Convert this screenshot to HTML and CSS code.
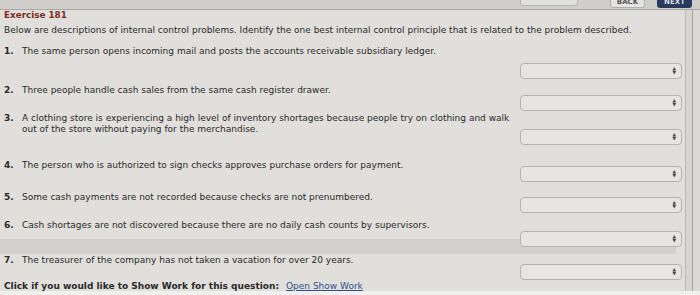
FILE: index.html
```html
<!DOCTYPE html>
<html>
<head>
<meta charset="utf-8">
<link rel="stylesheet" href="styles.css">
</head>
<body>
<div class="screen">
  <div class="topbar">
    <div class="btn-gray"></div>
    <div class="btn-back">BACK</div>
    <div class="btn-next">NEXT</div>
  </div>
  <div class="main">
    <div class="panel">
      <h1 class="title">Exercise 181</h1>
      <p class="intro">Below are descriptions of internal control problems. Identify the one best internal control principle that is related to the problem described.</p>
      <div class="rows">
        <div class="row r1">
          <p class="q"><b>1.</b><span>The same person opens incoming mail and posts the accounts receivable subsidiary ledger.</span></p>
          <div class="sel"><span class="arrows"><span>&#x25B2;</span><span>&#x25BC;</span></span></div>
        </div>
        <div class="row r2">
          <p class="q"><b>2.</b><span>Three people handle cash sales from the same cash register drawer.</span></p>
          <div class="sel"><span class="arrows"><span>&#x25B2;</span><span>&#x25BC;</span></span></div>
        </div>
        <div class="row r3">
          <p class="q"><b>3.</b><span>A clothing store is experiencing a high level of inventory shortages because people try on clothing and walk out of the store without paying for the merchandise.</span></p>
          <div class="sel"><span class="arrows"><span>&#x25B2;</span><span>&#x25BC;</span></span></div>
        </div>
        <div class="row r4">
          <p class="q"><b>4.</b><span>The person who is authorized to sign checks approves purchase orders for payment.</span></p>
          <div class="sel"><span class="arrows"><span>&#x25B2;</span><span>&#x25BC;</span></span></div>
        </div>
        <div class="row r5">
          <p class="q"><b>5.</b><span>Some cash payments are not recorded because checks are not prenumbered.</span></p>
          <div class="sel"><span class="arrows"><span>&#x25B2;</span><span>&#x25BC;</span></span></div>
        </div>
        <div class="row r6">
          <p class="q"><b>6.</b><span>Cash shortages are not discovered because there are no daily cash counts by supervisors.</span></p>
          <div class="sel"><span class="arrows"><span>&#x25B2;</span><span>&#x25BC;</span></span></div>
        </div>
        <div class="band"></div>
        <div class="row r7">
          <p class="q"><b>7.</b><span>The treasurer of the company has not taken a vacation for over 20 years.</span></p>
          <div class="sel"><span class="arrows"><span>&#x25B2;</span><span>&#x25BC;</span></span></div>
        </div>
      </div>
      <p class="showwork"><b>Click if you would like to Show Work for this question:</b><a href="#">Open Show Work</a></p>
    </div>
    <div class="edge"></div>
  </div>
  <div class="bottom"></div>
</div>
</body>
</html>
```

FILE: styles.css
```css
html, body {
  margin: 0;
  padding: 0;
  width: 700px;
  height: 295px;
  overflow: hidden;
  background: #2a2624;
  font-family: "DejaVu Sans", Verdana, sans-serif;
  color: #2a2a2a;
}
.screen {
  width: 700px;
  height: 295px;
  display: flex;
  flex-direction: column;
}
.topbar {
  height: 9px;
  background: #cfcecb;
  border-bottom: 1px solid #a9a8a5;
  display: flex;
  align-items: flex-start;
  flex: none;
}
.btn-gray {
  width: 56px;
  height: 5px;
  margin-left: 520px;
  background: #e0e0de;
  border: 1px solid #b7b6b3;
  border-top: none;
  border-radius: 0 0 4px 4px;
}
.btn-back {
  margin-left: 32px;
  width: 33px;
  height: 7px;
  background: #e3e3e1;
  border: 1px solid #b0afac;
  border-top: none;
  border-radius: 0 0 3px 3px;
  font-size: 7px;
  line-height: 4px;
  font-weight: bold;
  color: #555;
  text-align: center;
  overflow: hidden;
}
.btn-next {
  margin-left: 12px;
  width: 35px;
  height: 8px;
  background: #283a5e;
  border-radius: 0 0 3px 3px;
  font-size: 7px;
  line-height: 4px;
  font-weight: bold;
  color: #d8dde8;
  text-align: center;
  overflow: hidden;
}
.main {
  flex: 1;
  display: flex;
  background: #dad9d6;
  min-height: 0;
}
.panel {
  width: 686px;
  background: #e0dfdc;
  border-right: 1px solid #b9b8b5;
  padding: 0 0 0 4px;
  box-sizing: border-box;
}
.edge {
  width: 6px;
  background: #d6d5d2;
  border-right: 1px solid #a5a4a1;
}
.title {
  margin: 0;
  font-size: 8.8px;
  line-height: 10px;
  font-weight: bold;
  color: #7d2c1f;
}
.intro {
  margin: 5px 0 0 0;
  font-size: 9px;
  line-height: 11px;
}
.rows {
  margin-top: 10px;
  display: flex;
  flex-direction: column;
}
.row {
  display: flex;
  justify-content: space-between;
  align-items: flex-start;
  padding-right: 3px;
}
.q {
  margin: 0;
  width: 512px;
  display: flex;
  font-size: 9px;
  line-height: 11px;
  padding-bottom: 22px;
}
.q b {
  flex: none;
  width: 18px;
}
.sel {
  position: relative;
  margin-top: 11px;
  margin-bottom: -40px;
  width: 162px;
  height: 16px;
  box-sizing: border-box;
  border: 1px solid #b4b3b0;
  border-radius: 4px;
  background: #e6e5e3;
  display: flex;
  align-items: center;
  justify-content: flex-end;
  padding-right: 5px;
}
.arrows {
  display: flex;
  flex-direction: column;
  font-size: 4.5px;
  line-height: 4.5px;
  color: #444;
}
.r1 .q { padding-bottom: 28px; }
.r1 .sel { margin-top: 17px; }
.r2 .q { padding-bottom: 17px; }
.r2 .sel { margin-top: 10px; }
.r3 .q { padding-bottom: 25px; }
.r3 .sel { margin-top: 16px; }
.r4 .q { padding-bottom: 21px; }
.r4 .sel { margin-top: 6px; }
.r5 .q { padding-bottom: 17px; }
.r5 .sel { margin-top: 5px; }
.r6 .q { padding-bottom: 8px; }
.r6 .sel { margin-top: 11px; }
.r7 .q { padding-bottom: 15px; }
.r7 .sel { margin-top: 9px; }
.band {
  height: 15px;
  margin: 0 0 1px -4px;
  width: 676px;
  background: #d2d1ce;
}
.showwork {
  margin: 0;
  font-size: 9px;
  line-height: 11px;
}
.showwork a {
  color: #2f4f8f;
  margin-left: 7px;
  font-weight: normal;
}
.bottom {
  height: 4px;
  background: #efefed;
  flex: none;
}
```
